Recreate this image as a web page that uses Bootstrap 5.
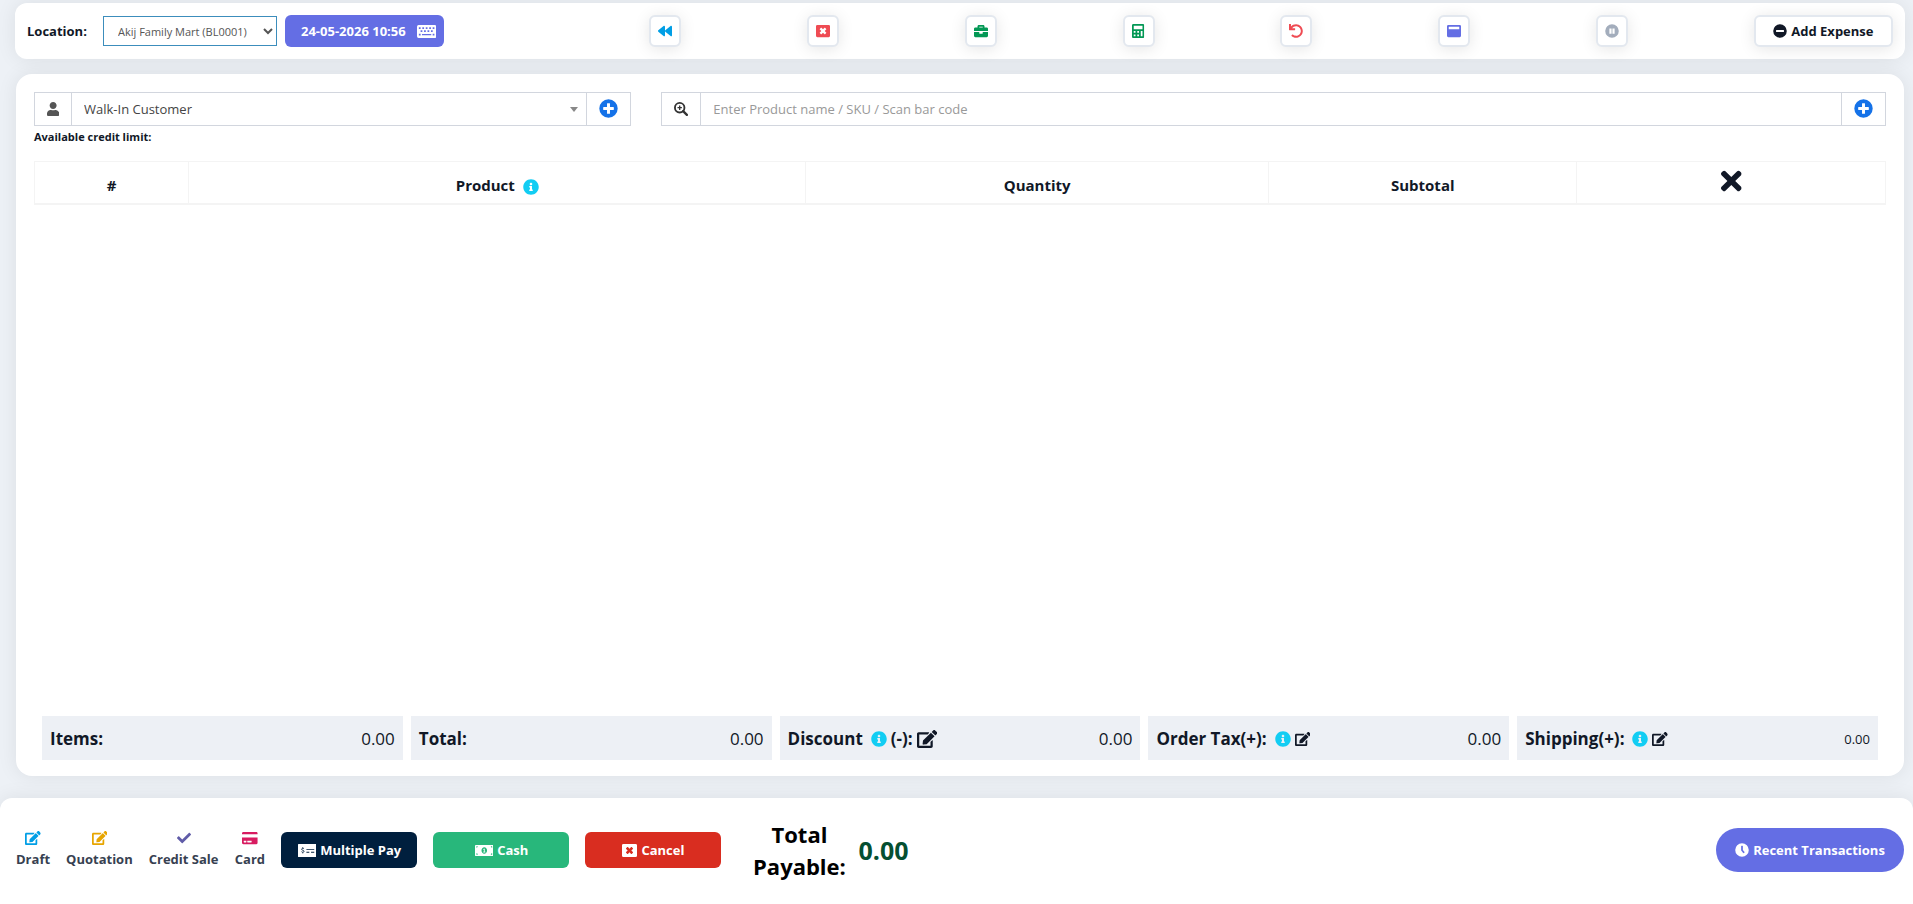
<!DOCTYPE html>
<html lang="en">
<head>
<meta charset="utf-8">
<meta name="viewport" content="width=device-width, initial-scale=1">
<title>POS</title>
<link href="https://cdn.jsdelivr.net/npm/bootstrap@5.3.0/dist/css/bootstrap.min.css" rel="stylesheet">
<style>
  body { background: #edf1f6; font-family: "Open Sans", "Noto Sans", sans-serif; font-size: 14px; line-height: 20px; color: #111827; }
  .panel { background: #fff; box-shadow: 0 0 20px rgba(0, 0, 0, .08); position: relative; z-index: 1; }
  .topbar { margin: 3px 8px 15px 15px; border-radius: 12px; padding: 12px; }
  .sale { margin: 0 9px 22px 16px; border-radius: 16px; padding: 18px 18px 16px; }
  .paybar { border-radius: 12px 12px 0 0; padding: 20px 9px 22px 16px; min-height: 106px; z-index: 0; }
  .ico { height: 1em; width: auto; fill: currentColor; flex: none; }

  .field-label { font-size: 13px; font-weight: 700; width: 76px; }
  .loc-select { height: 30px; width: 174px; border: 1px solid #3c8dbc; padding: 0 0 0 10px; font-size: 11px; color: #555; background: #fff; }
  .chip { height: 32px; width: 159px; border: 0; border-radius: 6px; background: #646ee4; color: #fff; font-size: 13px; font-weight: 700; padding: 0 8px 0 16px; }
  .chip .ico { height: 15px; }
  .tool { height: 32px; min-width: 32px; border: 2px solid #e3e8ef; border-radius: 6px; background: #fff; box-shadow: 0 2px 16px rgba(0, 0, 0, .1); padding: 0; font-size: 14px; }
  .tool-wide { width: 139px; font-size: 13px; font-weight: 700; color: #111827; gap: 4px; }
  .tool-wide .ico { height: 14px; }

  .entry { --bs-gutter-x: 30px; }
  .box { height: 34px; border: 1px solid #d2d6de; background: #fff; }
  .box > * + * { border: 0; border-left: 1px solid #d2d6de; }
  .box-icon { width: 36px; color: #555; font-size: 14px; }
  .box-icon.finder { width: 38px; color: #333; }
  .box-add { width: 44px; background: #fff; color: #1572e8; font-size: 19px; padding: 0 0 2px; }
  .box-text { font-size: 13px; color: #444; background: #fff; padding: 0 12px; outline: 0; min-width: 0; }
  .box-text::placeholder { color: #999; opacity: 1; }
  select.box-text { appearance: none; padding: 0 24px 0 12px; background: #fff url("data:image/svg+xml,%3Csvg xmlns='http://www.w3.org/2000/svg' width='8' height='5'%3E%3Cpath d='M0 0h8L4 5z' fill='%23888'/%3E%3C/svg%3E") no-repeat right 8px center; }
  .credit { font-size: 11px; font-weight: 700; padding-top: 1px; }

  .items-table { table-layout: fixed; border: 1px solid #f4f4f4; color: #111827; margin-top: 14px; }
  .items-table th { height: 42px; border: 1px solid #f4f4f4; border-bottom: 2px solid #f4f4f4; padding: 6px 8px 0; text-align: center; vertical-align: middle; font-size: 15px; font-weight: 700; }
  .items-table .ico { height: 16px; margin-left: 4px; }
  .items-table .clear { height: 30px; margin: -12px 0 0; }
  .info { color: #12cdf3; }

  .totals { gap: 8px; padding: 0 8px; }
  .total-tile { flex: 1 1 0; height: 44px; padding: 1px 8px 0; background: #edf0f5; font-size: 17px; }
  .total-tile b { font-weight: 700; }
  .total-tile .info { height: 16px; }
  .tile-edit { border: 0; background: none; padding: 0; color: #111827; font-size: 14px; }
  .tile-edit.large { font-size: 18px; }
  .total-tile .minor { font-size: 13px; }

  .mini { min-width: 31px; border: 0; background: none; padding: 0; color: #374151; font-size: 13px; font-weight: 700; gap: 4px; }
  .mini .ico { height: 14px; }
  .pay { width: 136px; height: 36px; border: 0; border-radius: 6px; color: #fff; font-size: 13px; font-weight: 700; gap: 4px; }
  .pay .ico { height: 13px; }
  .pay-multi { background: #001f3e; }
  .pay-cash { background: #28b77b; }
  .pay-cancel { background: #d92d20; }
  .pay-cancel .ico { height: 15px; }
  .due { margin-left: 15px; gap: 12px; line-height: 32px; font-weight: 700; }
  .due-label { width: 94px; text-align: center; color: #000; font-size: 22px; }
  .due-value { color: #054f31; font-size: 25px; }
  .recent { width: 188px; height: 44px; border: 0; border-radius: 22px; background: #646ee4; color: #fff; font-size: 13px; font-weight: 700; gap: 4px; }
  .recent .ico { height: 14px; }
</style>
</head>
<body class="min-vh-100 d-flex flex-column">

<svg class="d-none" xmlns="http://www.w3.org/2000/svg">
  <symbol id="i-back" viewBox="0 0 512 512"><path d="M11.5 280.6l192 160c20.600 17.200 52.500 2.800 52.500-24.600V96c0-27.400-31.900-41.800-52.500-24.600l-192 160c-15.300 12.800-15.300 36.400 0 49.200zm256 0l192 160c20.600 17.200 52.500 2.800 52.500-24.600V96c0-27.400-31.900-41.800-52.500-24.600l-192 160c-15.300 12.800-15.300 36.400 0 49.200z"/></symbol>
  <symbol id="i-close" viewBox="0 0 512 512"><path fill-rule="evenodd" d="M48 32h416a48 48 0 0 1 48 48v352a48 48 0 0 1-48 48H48a48 48 0 0 1-48-48V80a48 48 0 0 1 48-48zM180 140l-40 40c-8 8-8 14 0 22l54 54-54 54c-8 8-8 14 0 22l40 40c8 8 14 8 22 0l54-54 54 54c8 8 14 8 22 0l40-40c8-8 8-14 0-22l-54-54 54-54c8-8 8-14 0-22l-40-40c-8-8-14-8-22 0l-54 54-54-54c-8-8-14-8-22 0z"/></symbol>
  <symbol id="i-case" viewBox="0 0 512 512"><path fill-rule="evenodd" d="M320 336c0 8.800-7.200 16-16 16h-96c-8.800 0-16-7.200-16-16v-48H0v144c0 25.600 22.400 48 48 48h416c25.600 0 48-22.400 48-48V288H320v48zm144-208h-80V80c0-25.600-22.400-48-48-48H176c-25.600 0-48 22.400-48 48v48H48c-25.600 0-48 22.400-48 48v80h512v-80c0-25.600-22.400-48-48-48zm-144 0H192V96h128v32z"/></symbol>
  <symbol id="i-calc" viewBox="0 0 448 512"><path fill-rule="evenodd" d="M400 0H48C22 0 0 22 0 48v416c0 26 22 48 48 48h352c26 0 48-22 48-48V48c0-26-22-48-48-48zM64 64h320v128H64zM64 256h64v64H64zM192 256h64v64h-64zM320 256h64v192h-64zM64 384h64v64H64zM192 384h64v64h-64z"/></symbol>
  <symbol id="i-undo" viewBox="0 0 512 512"><path d="M212.333 224.333H12c-6.627 0-12-5.373-12-12V12C0 5.373 5.373 0 12 0h48c6.627 0 12 5.373 12 12v78.112C117.773 39.279 184.260 7.470 258.175 8.007c136.906.994 246.448 111.623 246.157 248.532C504.041 393.258 393.120 504 256.333 504c-64.089 0-122.496-24.313-166.510-64.215-5.099-4.622-5.334-12.554-.467-17.420l33.967-33.967c4.474-4.474 11.662-4.717 16.401-.525C170.760 415.336 211.580 432 256.333 432c97.268 0 176-78.716 176-176 0-97.267-78.716-176-176-176-58.496 0-110.280 28.476-142.274 72.333h98.274c6.627 0 12 5.373 12 12v48c0 6.627-5.373 12-12 12z"/></symbol>
  <symbol id="i-window" viewBox="0 0 512 512"><path fill-rule="evenodd" d="M48 32h416a48 48 0 0 1 48 48v352a48 48 0 0 1-48 48H48a48 48 0 0 1-48-48V80a48 48 0 0 1 48-48zm28 64a12 12 0 0 0-12 12v72a12 12 0 0 0 12 12h360a12 12 0 0 0 12-12v-72a12 12 0 0 0-12-12z"/></symbol>
  <symbol id="i-pause" viewBox="0 0 512 512"><path fill-rule="evenodd" d="M256 8a248 248 0 1 0 0 496 248 248 0 0 0 0-496zM160 160h80v192h-80zM272 160h80v192h-80z"/></symbol>
  <symbol id="i-minus" viewBox="0 0 512 512"><path fill-rule="evenodd" d="M256 8a248 248 0 1 0 0 496 248 248 0 0 0 0-496zM124 216h264a12 12 0 0 1 12 12v56a12 12 0 0 1-12 12H124a12 12 0 0 1-12-12v-56a12 12 0 0 1 12-12z"/></symbol>
  <symbol id="i-plus" viewBox="0 0 512 512"><path fill-rule="evenodd" d="M256 8a248 248 0 1 0 0 496 248 248 0 0 0 0-496zM228 112h56a12 12 0 0 1 12 12v92h92a12 12 0 0 1 12 12v56a12 12 0 0 1-12 12h-92v92a12 12 0 0 1-12 12h-56a12 12 0 0 1-12-12v-92h-92a12 12 0 0 1-12-12v-56a12 12 0 0 1 12-12h92v-92a12 12 0 0 1 12-12z"/></symbol>
  <symbol id="i-user" viewBox="0 0 448 512"><path d="M224 256c70.700 0 128-57.300 128-128S294.700 0 224 0 96 57.300 96 128s57.300 128 128 128zm89.600 32h-16.700c-22.200 10.200-46.900 16-72.900 16s-50.600-5.800-72.900-16h-16.700C60.200 288 0 348.200 0 422.400V464c0 26.500 21.500 48 48 48h352c26.500 0 48-21.500 48-48v-41.600c0-74.200-60.200-134.400-134.400-134.400z"/></symbol>
  <symbol id="i-zoom" viewBox="0 0 512 512"><circle cx="208" cy="208" r="174" fill="none" stroke="currentColor" stroke-width="68"/><path d="M334 334l136 136" stroke="currentColor" stroke-width="84" stroke-linecap="round"/><path d="M208 128v160M128 208h160" stroke="currentColor" stroke-width="48"/></symbol>
  <symbol id="i-info" viewBox="0 0 512 512"><path d="M256 8C119.043 8 8 119.083 8 256c0 136.997 111.043 248 248 248s248-111.003 248-248C504 119.083 392.957 8 256 8zm0 110c23.196 0 42 18.804 42 42s-18.804 42-42 42-42-18.804-42-42 18.804-42 42-42zm56 254c0 6.627-5.373 12-12 12h-88c-6.627 0-12-5.373-12-12v-24c0-6.627 5.373-12 12-12h12v-64h-12c-6.627 0-12-5.373-12-12v-24c0-6.627 5.373-12 12-12h64c6.627 0 12 5.373 12 12v100h12c6.627 0 12 5.373 12 12v24z"/></symbol>
  <symbol id="i-times" viewBox="0 0 352 512"><path d="M242.720 256l100.070-100.070c12.280-12.280 12.280-32.190 0-44.480l-22.240-22.240c-12.280-12.280-32.190-12.280-44.480 0L176 189.280 75.930 89.210c-12.280-12.280-32.190-12.280-44.480 0L9.210 111.450c-12.280 12.280-12.280 32.190 0 44.480L109.280 256 9.210 356.070c-12.280 12.280-12.280 32.190 0 44.480l22.240 22.240c12.280 12.280 32.200 12.280 44.480 0L176 322.720l100.070 100.070c12.280 12.280 32.200 12.280 44.480 0l22.240-22.240c12.280-12.280 12.280-32.190 0-44.480L242.720 256z"/></symbol>
  <symbol id="i-edit" viewBox="0 0 576 512"><path d="M402.600 83.200l90.200 90.200c3.800 3.800 3.800 10 0 13.800L274.400 405.600l-92.800 10.300c-12.400 1.400-22.900-9.100-21.500-21.500l10.300-92.800L388.800 83.200c3.800-3.800 10-3.800 13.800 0zm162-22.900l-48.800-48.800c-15.200-15.200-39.900-15.200-55.200 0l-35.400 35.400c-3.800 3.800-3.800 10 0 13.800l90.200 90.200c3.800 3.800 10 3.800 13.800 0l35.400-35.400c15.200-15.300 15.200-40 0-55.200zM384 346.200V448H64V128h229.800c3.200 0 6.200-1.300 8.500-3.500l40-40c7.600-7.600 2.200-20.500-8.500-20.500H48C21.500 64 0 85.500 0 112v352c0 26.500 21.500 48 48 48h352c26.500 0 48-21.500 48-48V306.200c0-10.700-12.900-16-20.500-8.500l-40 40c-2.200 2.300-3.500 5.300-3.500 8.500z"/></symbol>
  <symbol id="i-check" viewBox="0 0 512 512"><path d="M173.898 439.404l-166.400-166.400c-9.997-9.997-9.997-26.206 0-36.204l36.203-36.204c9.997-9.998 26.207-9.998 36.204 0L192 312.690 432.095 72.596c9.997-9.997 26.207-9.997 36.204 0l36.203 36.204c9.997 9.997 9.997 26.206 0 36.204l-294.400 294.401c-9.998 9.997-26.207 9.997-36.204-.001z"/></symbol>
  <symbol id="i-card" viewBox="0 0 576 512"><path fill-rule="evenodd" d="M0 432c0 26.500 21.500 48 48 48h480c26.500 0 48-21.500 48-48V240H0v192zm192-68c0-6.600 5.400-12 12-12h136c6.600 0 12 5.400 12 12v40c0 6.600-5.400 12-12 12H204c-6.600 0-12-5.400-12-12v-40zm-128 0c0-6.600 5.400-12 12-12h72c6.600 0 12 5.400 12 12v40c0 6.600-5.400 12-12 12H76c-6.600 0-12-5.400-12-12v-40zM576 80v40H0V80c0-26.500 21.500-48 48-48h480c26.500 0 48 21.500 48 48z"/></symbol>
  <symbol id="i-keyboard" viewBox="0 0 576 448"><path fill-rule="evenodd" d="M48 32h480a48 48 0 0 1 48 48v288a48 48 0 0 1-48 48H48a48 48 0 0 1-48-48V80a48 48 0 0 1 48-48zM56 96h52v50H56zM159 96h52v50h-52zM262 96h52v50h-52zM365 96h52v50h-52zM468 96h52v50h-52zM108 190h52v50h-52zM211 190h52v50h-52zM314 190h52v50h-52zM417 190h52v50h-52zM56 290h52v50H56zM150 296h276v38H150zM468 290h52v50h-52z"/></symbol>
  <symbol id="i-check-money" viewBox="0 0 640 448"><path fill-rule="evenodd" d="M20 0h600a20 20 0 0 1 20 20v408a20 20 0 0 1-20 20H20a20 20 0 0 1-20-20V20A20 20 0 0 1 20 0zM290 170h270v32H290zM290 270h100v32H290zM450 270h110v32H450z"/><path d="M206 168c-20-26-82-24-82 14 0 46 84 24 84 70 0 42-66 42-88 12M164 110v36M164 288v36" fill="none" stroke="#001f3e" stroke-width="28"/></symbol>
  <symbol id="i-bill" viewBox="0 0 640 448"><path fill-rule="evenodd" d="M32 32h576a32 32 0 0 1 32 32v320a32 32 0 0 1-32 32H32a32 32 0 0 1-32-32V64a32 32 0 0 1 32-32zM320 112c-53 0-96 50-96 112s43 112 96 112 96-50 96-112-43-112-96-112zM48 80v48a48 48 0 0 0 48-48zM592 80h-48a48 48 0 0 0 48 48zM48 368h48a48 48 0 0 0-48-48zM592 368v-48a48 48 0 0 0-48 48z"/><path d="M286 188l36-18v104M284 278h74" fill="none" stroke="#fff" stroke-width="30"/></symbol>
  <symbol id="i-clock" viewBox="0 0 512 512"><path fill-rule="evenodd" d="M256 8a248 248 0 1 0 0 496 248 248 0 0 0 0-496zM236 104h40a12 12 0 0 1 12 12v136l62 78c4 5 3 12-2 16l-32 26c-5 4-12 3-16-2l-66-84a48 48 0 0 1-10-30V116a12 12 0 0 1 12-12z"/></symbol>
</svg>

<header class="panel topbar">
  <div class="row g-0 align-items-center">
    <div class="col-4 d-flex align-items-center">
      <label class="field-label" for="location">Location:</label>
      <select id="location" class="loc-select me-2">
        <option>Akij Family Mart (BL0001)</option>
      </select>
      <button type="button" class="chip d-flex align-items-center justify-content-between">24-05-2026 10:56 <svg class="ico" viewBox="0 0 576 448"><use href="#i-keyboard"/></svg></button>
    </div>
    <div class="col-8 d-flex justify-content-between">
      <button type="button" class="tool d-flex align-items-center justify-content-center" style="color:#009ee5" aria-label="Back"><svg class="ico" viewBox="0 0 512 512"><use href="#i-back"/></svg></button>
      <button type="button" class="tool d-flex align-items-center justify-content-center" style="color:#ef4b53" aria-label="Close register"><svg class="ico" viewBox="0 0 512 512"><use href="#i-close"/></svg></button>
      <button type="button" class="tool d-flex align-items-center justify-content-center" style="color:#039855" aria-label="Register details"><svg class="ico" viewBox="0 0 512 512"><use href="#i-case"/></svg></button>
      <button type="button" class="tool d-flex align-items-center justify-content-center" style="color:#039855" aria-label="Calculator"><svg class="ico" viewBox="0 0 448 512"><use href="#i-calc"/></svg></button>
      <button type="button" class="tool d-flex align-items-center justify-content-center" style="color:#ef4b53" aria-label="Return"><svg class="ico" viewBox="0 0 512 512"><use href="#i-undo"/></svg></button>
      <button type="button" class="tool d-flex align-items-center justify-content-center" style="color:#646ee4" aria-label="Full screen"><svg class="ico" viewBox="0 0 512 512"><use href="#i-window"/></svg></button>
      <button type="button" class="tool d-flex align-items-center justify-content-center" style="color:#a3adbc" aria-label="Suspended sales"><svg class="ico" viewBox="0 0 512 512"><use href="#i-pause"/></svg></button>
      <button type="button" class="tool tool-wide d-flex align-items-center justify-content-center"><svg class="ico" viewBox="0 0 512 512"><use href="#i-minus"/></svg>Add Expense</button>
    </div>
  </div>
</header>

<main class="panel sale flex-grow-1 d-flex flex-column">
  <div class="row entry">
    <div class="col-4">
      <div class="box d-flex">
        <label class="box-icon d-flex align-items-center justify-content-center" for="customer" aria-label="Customer"><svg class="ico" viewBox="0 0 448 512"><use href="#i-user"/></svg></label>
        <select id="customer" class="box-text flex-grow-1"><option>Walk-In Customer</option></select>
        <button type="button" class="box-add d-flex align-items-center justify-content-center" aria-label="Add customer"><svg class="ico" viewBox="0 0 512 512"><use href="#i-plus"/></svg></button>
      </div>
      <div class="credit">Available credit limit:</div>
    </div>
    <div class="col-8">
      <div class="box d-flex">
        <label class="box-icon finder d-flex align-items-center justify-content-center" for="product" aria-label="Search"><svg class="ico" viewBox="0 0 512 512"><use href="#i-zoom"/></svg></label>
        <input id="product" type="text" class="box-text flex-grow-1" placeholder="Enter Product name / SKU / Scan bar code">
        <button type="button" class="box-add d-flex align-items-center justify-content-center" aria-label="Add product"><svg class="ico" viewBox="0 0 512 512"><use href="#i-plus"/></svg></button>
      </div>
    </div>
  </div>

  <table class="items-table w-100 mb-auto">
    <thead>
      <tr>
        <th class="col-1">#</th>
        <th class="col-4">Product <svg class="ico info" viewBox="0 0 512 512"><use href="#i-info"/></svg></th>
        <th class="col-3">Quantity</th>
        <th class="col-2">Subtotal</th>
        <th class="col-2"><svg class="ico clear" viewBox="0 0 352 512" role="img" aria-label="Remove"><use href="#i-times"/></svg></th>
      </tr>
    </thead>
  </table>

  <div class="totals d-flex">
    <div class="total-tile d-flex align-items-center"><b>Items:</b><span class="ms-auto">0.00</span></div>
    <div class="total-tile d-flex align-items-center"><b>Total:</b><span class="ms-auto">0.00</span></div>
    <div class="total-tile d-flex align-items-center"><b>Discount</b><svg class="ico info ms-2 me-1" viewBox="0 0 512 512"><use href="#i-info"/></svg><b>(-):</b><button type="button" class="tile-edit large d-flex ms-1" aria-label="Edit discount"><svg class="ico" viewBox="0 0 576 512"><use href="#i-edit"/></svg></button><span class="ms-auto">0.00</span></div>
    <div class="total-tile d-flex align-items-center"><b>Order Tax(+):</b><svg class="ico info ms-2 me-1" viewBox="0 0 512 512"><use href="#i-info"/></svg><button type="button" class="tile-edit d-flex" aria-label="Edit order tax"><svg class="ico" viewBox="0 0 576 512"><use href="#i-edit"/></svg></button><span class="ms-auto">0.00</span></div>
    <div class="total-tile d-flex align-items-center"><b>Shipping(+):</b><svg class="ico info ms-2 me-1" viewBox="0 0 512 512"><use href="#i-info"/></svg><button type="button" class="tile-edit d-flex" aria-label="Edit shipping"><svg class="ico" viewBox="0 0 576 512"><use href="#i-edit"/></svg></button><span class="minor ms-auto">0.00</span></div>
  </div>
</main>

<footer class="panel paybar d-flex align-items-start">
  <div class="d-flex align-items-center gap-3">
    <button type="button" class="mini d-flex flex-column align-items-center"><svg class="ico" style="color:#009ee5" viewBox="0 0 576 512"><use href="#i-edit"/></svg>Draft</button>
    <button type="button" class="mini d-flex flex-column align-items-center"><svg class="ico" style="color:#e7a500" viewBox="0 0 576 512"><use href="#i-edit"/></svg>Quotation</button>
    <button type="button" class="mini d-flex flex-column align-items-center"><svg class="ico" style="color:#605ca8" viewBox="0 0 512 512"><use href="#i-check"/></svg>Credit Sale</button>
    <button type="button" class="mini d-flex flex-column align-items-center"><svg class="ico" style="color:#d81b60" viewBox="0 0 576 512"><use href="#i-card"/></svg>Card</button>
    <button type="button" class="pay pay-multi d-flex align-items-center justify-content-center"><svg class="ico" viewBox="0 0 640 448"><use href="#i-check-money"/></svg>Multiple Pay</button>
    <button type="button" class="pay pay-cash d-flex align-items-center justify-content-center"><svg class="ico" viewBox="0 0 640 448"><use href="#i-bill"/></svg>Cash</button>
    <button type="button" class="pay pay-cancel d-flex align-items-center justify-content-center"><svg class="ico" viewBox="0 0 512 512"><use href="#i-close"/></svg>Cancel</button>
    <div class="due d-flex align-items-center"><div class="due-label">Total Payable:</div><div class="due-value">0.00</div></div>
  </div>
  <button type="button" class="recent d-flex align-items-center justify-content-center ms-auto align-self-center"><svg class="ico" viewBox="0 0 512 512"><use href="#i-clock"/></svg>Recent Transactions</button>
</footer>

<script src="https://cdn.jsdelivr.net/npm/bootstrap@5.3.0/dist/js/bootstrap.bundle.min.js"></script>
</body>
</html>
